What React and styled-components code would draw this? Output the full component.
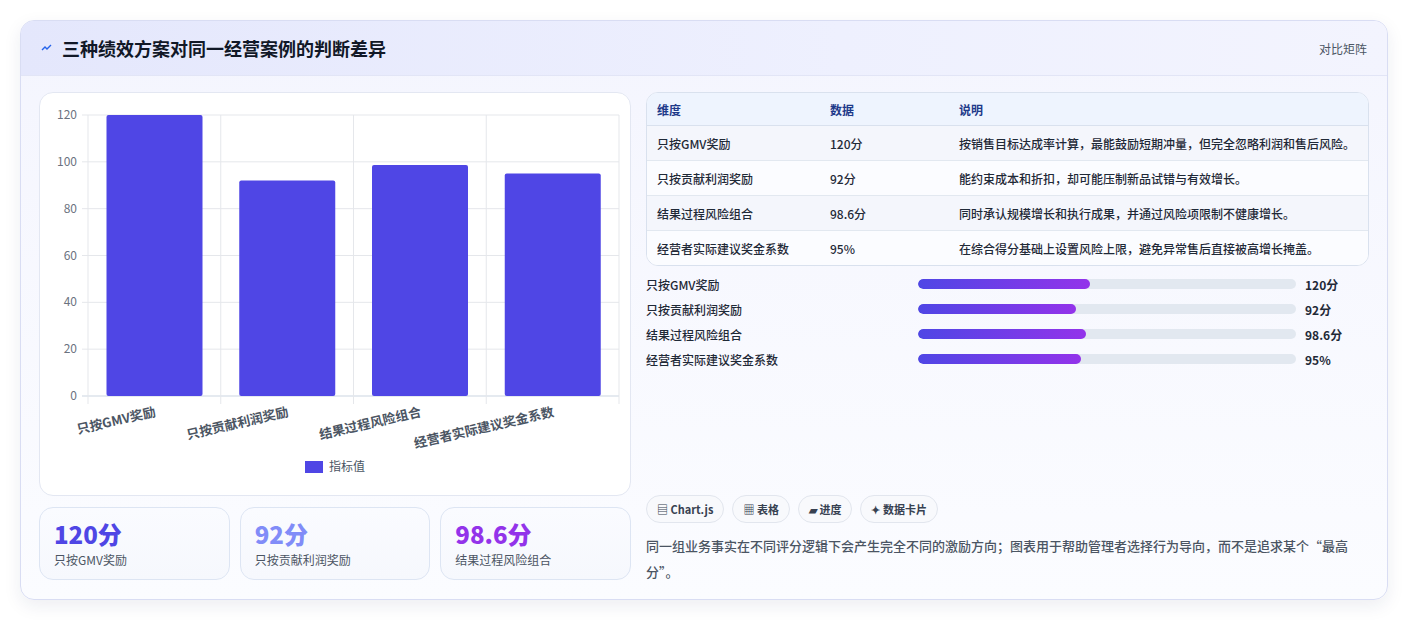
import React from 'react';
import styled, { createGlobalStyle } from 'styled-components';

const Global = createGlobalStyle`
  body { margin: 0; background: #ffffff; font-family: "Noto Sans CJK SC", "Noto Sans", sans-serif; }
`;

const Page = styled.div`
  padding: 20px;
`;

const Card = styled.div`
  width: 1368px;
  height: 580px;
  box-sizing: border-box;
  border: 1px solid #d9ddf3;
  border-radius: 14px;
  background: linear-gradient(180deg, #f4f5fe 0%, #fbfcff 100%);
  box-shadow: 0 6px 18px rgba(30, 41, 90, 0.08);
  overflow: hidden;
`;

const Header = styled.div`
  height: 54px;
  display: flex;
  align-items: center;
  justify-content: space-between;
  padding: 0 20px;
  background: linear-gradient(90deg, #e4e7fc 0%, #eef0fe 60%, #f3f4fe 100%);
  border-bottom: 1px solid #e2e5f6;
`;

const Title = styled.h2`
  margin: 0;
  display: flex;
  align-items: center;
  gap: 9px;
  font-size: 18px;
  font-weight: 700;
  color: #111827;
`;

const HeaderLink = styled.span`
  font-size: 12px;
  color: #4b5563;
`;

const Body = styled.div`
  display: grid;
  grid-template-columns: 592px 1fr;
  gap: 15px;
  padding: 16px 18px 0 18px;
`;

const Column = styled.div`
  display: flex;
  flex-direction: column;
`;

const ChartCard = styled.div`
  height: 404px;
  box-sizing: border-box;
  background: #fff;
  border: 1px solid #e3e7f2;
  border-radius: 14px;
`;

const Stats = styled.div`
  display: grid;
  grid-template-columns: repeat(3, 1fr);
  gap: 10px;
  margin-top: 11px;
`;

const Stat = styled.div`
  height: 73px;
  box-sizing: border-box;
  border: 1px solid #dde5f3;
  border-radius: 14px;
  background: linear-gradient(180deg, #fafbff, #f6f8fd);
  padding: 9px 14px;
`;

const StatValue = styled.div`
  font-size: 24px;
  font-weight: 800;
  line-height: 34px;
  color: ${p => p.color};
`;

const StatLabel = styled.div`
  font-size: 12px;
  color: #4b5563;
`;

const Table = styled.table`
  width: 100%;
  border-collapse: separate;
  border-spacing: 0;
  border: 1px solid #d9e1ee;
  border-radius: 12px;
  overflow: hidden;
  font-size: 12px;
  background: #fff;
`;

const Th = styled.th`
  text-align: left;
  font-weight: 600;
  color: #1e3a8a;
  background: #eef4fe;
  height: 32px;
  padding: 0 10px;
  border-bottom: 1px solid #d9e1ee;
  width: ${p => p.w || 'auto'};
`;

const Td = styled.td`
  height: 34px;
  padding: 0 10px;
  color: #1f2937;
  font-weight: 500;
  background: ${p => (p.odd ? '#f4f6fc' : '#fbfcff')};
  border-top: ${p => (p.first ? 'none' : '1px solid #e2e8f0')};
`;

const Progress = styled.div`
  display: flex;
  flex-direction: column;
  gap: 7px;
  margin-top: 9px;
`;

const ProgRow = styled.div`
  display: grid;
  grid-template-columns: 263px 1fr 64px;
  gap: 9px;
  align-items: center;
  font-size: 12px;
  font-weight: 500;
  color: #1f2937;
  height: 18px;
`;

const Value = styled.span`
  font-weight: 700;
`;

const Track = styled.div`
  height: 10px;
  border-radius: 5px;
  background: #e2e8f0;
  overflow: hidden;
`;

const Fill = styled.div`
  height: 100%;
  border-radius: 5px;
  background: linear-gradient(90deg, #4f46e5, #9333ea);
`;

const Spacer = styled.div`
  flex: 1;
`;

const Chips = styled.div`
  display: flex;
  gap: 8px;
`;

const Chip = styled.span`
  height: 28px;
  box-sizing: border-box;
  display: inline-flex;
  align-items: center;
  gap: 4px;
  padding: 0 10px;
  border: 1px solid #e2e6ee;
  border-radius: 14px;
  background: #f8f9fc;
  font-size: 11px;
  font-weight: 600;
  color: #374151;
`;

const Note = styled.p`
  margin: 10px 0 -5px;
  font-size: 13px;
  line-height: 26px;
  color: #4b5563;
  font-weight: 500;
`;

const rows = [
  ['只按GMV奖励', '120分', '按销售目标达成率计算，最能鼓励短期冲量，但完全忽略利润和售后风险。', 120, 45.5],
  ['只按贡献利润奖励', '92分', '能约束成本和折扣，却可能压制新品试错与有效增长。', 92, 41.8],
  ['结果过程风险组合', '98.6分', '同时承认规模增长和执行成果，并通过风险项限制不健康增长。', 98.6, 44.4],
  ['经营者实际建议奖金系数', '95%', '在综合得分基础上设置风险上限，避免异常售后直接被高增长掩盖。', 95, 43.1],
];

const Chart = () => {
  const x0 = 48, x1 = 579, yTop = 22, yBot = 303;
  const cw = (x1 - x0) / 4;
  const yOf = v => yBot - (v * (yBot - yTop)) / 120;
  return (
    <svg width="590" height="402" viewBox="0 0 590 402" fontFamily='"Noto Sans CJK SC", sans-serif'>
      {[0, 20, 40, 60, 80, 100, 120].map(v => (
        <g key={v}>
          <line x1={x0 - 6} x2={x1} y1={yOf(v)} y2={yOf(v)} stroke={v === 0 ? '#cbd5e1' : '#e5e7eb'} />
          <text x={x0 - 11} y={yOf(v) + 4} textAnchor="end" fontSize="12" fill="#6b7280">{v}</text>
        </g>
      ))}
      {[0, 1, 2, 3, 4].map(i => (
        <line key={i} x1={x0 + cw * i} x2={x0 + cw * i} y1={yTop} y2={yBot + 8} stroke="#e5e7eb" />
      ))}
      {rows.map((r, i) => {
        const bx = x0 + cw * i + 18.5;
        const lx = x0 + cw * i + cw / 2 + 2;
        const ly = yBot + 20;
        return (
          <g key={r[0]}>
            <rect x={bx} y={yOf(r[3])} width="96" height={yBot - yOf(r[3])} rx="2" fill="#4f46e5" />
            <text
              x={lx}
              y={ly}
              textAnchor="end"
              fontSize="13"
              fontWeight="600"
              fill="#4b5563"
              transform={`rotate(-13 ${lx} ${ly})`}
            >{r[0]}</text>
          </g>
        );
      })}
      <rect x="265" y="368" width="18" height="12" fill="#4f46e5" />
      <text x="289" y="378" fontSize="12" fill="#4b5563">指标值</text>
    </svg>
  );
};

export default function App() {
  return (
    <Page>
      <Global />
      <Card>
        <Header>
          <Title>
            <svg width="12" height="10" viewBox="0 0 12 10">
              <path d="M1 7 L4 4 L6 6 L10 2" stroke="#2563eb" strokeWidth="1.4" fill="none" />
            </svg>
            三种绩效方案对同一经营案例的判断差异
          </Title>
          <HeaderLink>对比矩阵</HeaderLink>
        </Header>
        <Body>
          <Column>
            <ChartCard><Chart /></ChartCard>
            <Stats>
              <Stat><StatValue color="#4f46e5">120分</StatValue><StatLabel>只按GMV奖励</StatLabel></Stat>
              <Stat><StatValue color="#818cf8">92分</StatValue><StatLabel>只按贡献利润奖励</StatLabel></Stat>
              <Stat><StatValue color="#9333ea">98.6分</StatValue><StatLabel>结果过程风险组合</StatLabel></Stat>
            </Stats>
          </Column>
          <Column>
            <Table>
              <thead>
                <tr><Th w="153px">维度</Th><Th w="109px">数据</Th><Th>说明</Th></tr>
              </thead>
              <tbody>
                {rows.map((r, i) => (
                  <tr key={r[0]}>
                    <Td first={i === 0} odd={i % 2 === 0}>{r[0]}</Td>
                    <Td first={i === 0} odd={i % 2 === 0}>{r[1]}</Td>
                    <Td first={i === 0} odd={i % 2 === 0}>{r[2]}</Td>
                  </tr>
                ))}
              </tbody>
            </Table>
            <Progress>
              {rows.map(r => (
                <ProgRow key={r[0]}>
                  <span>{r[0]}</span>
                  <Track><Fill style={{ width: `${r[4]}%` }} /></Track>
                  <Value>{r[1]}</Value>
                </ProgRow>
              ))}
            </Progress>
            <Spacer />
            <Chips>
              <Chip>▤ Chart.js</Chip>
              <Chip>▦ 表格</Chip>
              <Chip>▰ 进度</Chip>
              <Chip>✦ 数据卡片</Chip>
            </Chips>
            <Note>同一组业务事实在不同评分逻辑下会产生完全不同的激励方向；图表用于帮助管理者选择行为导向，而不是追求某个“最高分”。</Note>
          </Column>
        </Body>
      </Card>
    </Page>
  );
}
